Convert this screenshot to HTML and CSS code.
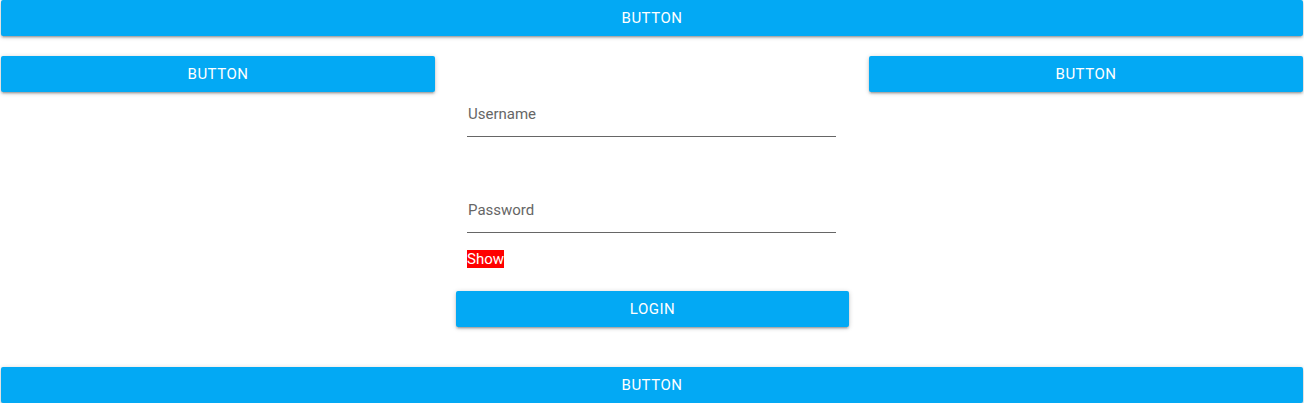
FILE: index.html
```html
<!DOCTYPE html>
<html>
<head>
<meta charset="utf-8">
<link rel="stylesheet" href="styles.css">
</head>
<body>
<div class="page">
  <button class="btn btn-full">Button</button>
  <div class="row">
    <div class="col"><button class="btn">Button</button></div>
    <div class="col col-mid">
      <div class="field"><span class="placeholder">Username</span></div>
      <div class="field field-pass"><span class="placeholder">Password</span></div>
      <div class="show-row"><span class="show">Show</span></div>
      <button class="btn btn-login">Login</button>
    </div>
    <div class="col"><button class="btn">Button</button></div>
  </div>
  <button class="btn btn-full btn-bottom">Button</button>
</div>
</body>
</html>
```

FILE: styles.css
```css
html, body {
  margin: 0;
  padding: 0;
  background: #fff;
}
.page {
  padding: 0 1px;
  font-family: Roboto, "Liberation Sans", sans-serif;
}
.btn {
  display: block;
  width: 100%;
  height: 36px;
  margin: 0;
  padding: 0;
  border: none;
  border-radius: 2px;
  background: #03a9f4;
  color: #fff;
  font-family: Roboto, "Liberation Sans", sans-serif;
  font-size: 15px;
  font-weight: 400;
  letter-spacing: 0.5px;
  text-transform: uppercase;
  box-shadow: 0 2px 2px 0 rgba(0,0,0,.14), 0 3px 1px -2px rgba(0,0,0,.12), 0 1px 5px 0 rgba(0,0,0,.2);
}
.row {
  margin-top: 20px;
  display: grid;
  grid-template-columns: 1fr 1fr 1fr;
  align-items: start;
}
.col-mid {
  display: flex;
  flex-direction: column;
}
.field {
  margin: 48px 33px 0 32px;
  padding: 0 0 12px 1px;
  border-bottom: 1px solid #666;
  line-height: 20px;
  font-size: 15px;
}
.field-pass {
  margin-top: 63px;
}
.placeholder {
  color: #666;
}
.show-row {
  margin: 17px 32px 0;
  line-height: 18px;
  height: 18px;
}
.show {
  display: inline-block;
  background: #f00;
  color: #fff;
  font-size: 15px;
  line-height: 18px;
}
.btn-login {
  margin: 23px 20px 0 21px;
  width: auto;
}
.btn-bottom {
  margin-top: 40px;
}
```
